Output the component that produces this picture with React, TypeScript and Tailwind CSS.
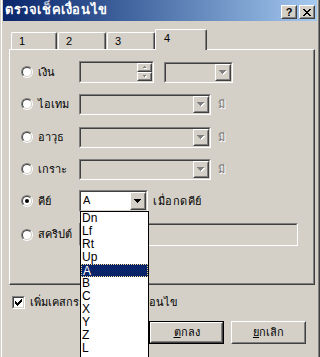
import React from "react";

function Sunken({
  className = "",
  innerClassName = "",
  children,
}: {
  className?: string;
  innerClassName?: string;
  children?: React.ReactNode;
}) {
  return (
    <div className={`shrink-0 border border-t-[#808080] border-l-[#808080] border-r-white border-b-white ${className}`}>
      <div className={`h-full w-full border border-t-[#404040] border-l-[#404040] border-r-[#d4d0c8] border-b-[#d4d0c8] ${innerClassName}`}>
        {children}
      </div>
    </div>
  );
}

function Raised({ className = "", children }: { className?: string; children?: React.ReactNode }) {
  return (
    <div className={`shrink-0 border border-t-white border-l-white border-r-[#404040] border-b-[#404040] bg-[#d4d0c8] ${className}`}>
      <div className="flex h-full w-full items-center justify-center border border-t-[#d4d0c8] border-l-[#d4d0c8] border-r-[#808080] border-b-[#808080]">
        {children}
      </div>
    </div>
  );
}

function DownArrow({ disabled = false }: { disabled?: boolean }) {
  const c = disabled ? "#808080" : "#000000";
  return (
    <svg width="8" height="5" shapeRendering="crispEdges">
      {disabled && (
        <g fill="#ffffff">
          <rect x="1" y="1" width="7" height="1" />
          <rect x="2" y="2" width="5" height="1" />
          <rect x="3" y="3" width="3" height="1" />
          <rect x="4" y="4" width="1" height="1" />
        </g>
      )}
      <g fill={c}>
        <rect x="0" y="0" width="7" height="1" />
        <rect x="1" y="1" width="5" height="1" />
        <rect x="2" y="2" width="3" height="1" />
        <rect x="3" y="3" width="1" height="1" />
      </g>
    </svg>
  );
}

function SpinArrow({ up }: { up: boolean }) {
  return (
    <svg width="6" height="4" shapeRendering="crispEdges">
      <g fill="#ffffff">
        {up ? (
          <>
            <rect x="3" y="1" width="1" height="1" />
            <rect x="2" y="2" width="3" height="1" />
          </>
        ) : (
          <>
            <rect x="2" y="1" width="3" height="1" />
            <rect x="3" y="2" width="1" height="1" />
          </>
        )}
      </g>
      <g fill="#808080">
        {up ? (
          <>
            <rect x="2" y="0" width="1" height="1" />
            <rect x="1" y="1" width="3" height="1" />
          </>
        ) : (
          <>
            <rect x="1" y="0" width="3" height="1" />
            <rect x="2" y="1" width="1" height="1" />
          </>
        )}
      </g>
    </svg>
  );
}

function Radio({ checked = false }: { checked?: boolean }) {
  return (
    <span className="flex h-[12px] w-[12px] shrink-0 rounded-full border border-t-[#808080] border-l-[#808080] border-r-white border-b-white">
      <span className="flex h-full w-full items-center justify-center rounded-full border border-t-[#404040] border-l-[#404040] border-r-[#d4d0c8] border-b-[#d4d0c8] bg-white">
        {checked && <span className="h-[4px] w-[4px] rounded-full bg-black" />}
      </span>
    </span>
  );
}

function ComboInner({ disabled, value }: { disabled: boolean; value?: string }) {
  return (
    <div className="flex h-full">
      <div className="flex-1 pl-[2px] leading-[17px]">{value}</div>
      <Raised className="h-full w-[16px]">
        <DownArrow disabled={disabled} />
      </Raised>
    </div>
  );
}

function Row({
  label,
  checked = false,
  className = "",
  children,
}: {
  label: string;
  checked?: boolean;
  className?: string;
  children?: React.ReactNode;
}) {
  return (
    <div className={`flex items-center pl-[11px] ${className}`}>
      <Radio checked={checked} />
      <span className="ml-[5px] w-[41px] shrink-0 whitespace-nowrap">{label}</span>
      {children}
    </div>
  );
}

const disabledText = "text-[#808080] [text-shadow:1px_1px_0_#ffffff]";

const keys = ["Dn", "Lf", "Rt", "Up", "A", "B", "C", "X", "Y", "Z", "L"];

export default function App() {
  return (
    <div className="relative h-[357px] w-[320px] overflow-hidden border-l border-r border-l-[#d4d0c8] border-r-[#404040] bg-[#d4d0c8] font-['Liberation_Sans','DejaVu_Sans',sans-serif] text-[11px] text-black">
      <div className="h-full border-l border-r border-l-white border-r-[#808080] px-px">
        {/* caption */}
        <div className="flex h-[21px] items-start justify-between bg-gradient-to-r from-[#0a246a] to-[#a6caf0]">
          <span className="pl-[2px] pt-[2px] text-[13px] font-bold leading-[16px] tracking-[0.6px] text-white">ตรวจเช็คเงื่อนไข</span>
          <div className="flex gap-[2px] pr-[2px] pt-[5px]">
            <Raised className="h-[14px] w-[16px]">
              <span className="text-[11px] font-bold leading-none">?</span>
            </Raised>
            <Raised className="h-[14px] w-[16px]">
              <svg width="8" height="7" shapeRendering="crispEdges">
                <path d="M0 0h2v1h-2zM6 0h2v1h-2zM1 1h2v1h-2zM5 1h2v1h-2zM2 2h4v1h-4zM3 3h2v1h-2zM2 4h4v1h-4zM1 5h2v1h-2zM5 5h2v1h-2zM0 6h2v1h-2zM6 6h2v1h-2z" fill="#000" />
              </svg>
            </Raised>
          </div>
        </div>

        {/* tabs */}
        <div className="relative z-10 -mb-px mt-[8px] flex h-[21px] items-end pl-[8px]">
          {[
            { t: "1", w: "w-[46px]" },
            { t: "2", w: "w-[48px]" },
            { t: "3", w: "w-[48px]" },
          ].map((tab, i) => (
            <div
              key={tab.t}
              className={`mb-px h-[17px] ${tab.w} ${i > 0 ? "ml-px" : ""} rounded-t-[2px] border-l border-r border-t border-l-white border-r-[#404040] border-t-white pl-[7px] pt-[2px] leading-[13px] shadow-[inset_-1px_0_0_#808080]`}
            >
              {tab.t}
            </div>
          ))}
          <div className="h-[21px] w-[52px] rounded-t-[2px] border-l border-r border-t border-l-white border-r-[#404040] border-t-white bg-[#d4d0c8] pl-[8px] pt-[2px] leading-[13px] shadow-[inset_-1px_0_0_#808080]">
            4
          </div>
        </div>

        {/* tab page */}
        <div className="ml-[6px] mr-[2px] h-[236px] border border-b-[#404040] border-l-white border-r-[#404040] border-t-white pt-[11px] shadow-[inset_-1px_-1px_0_#808080]">
          <Row label="เงิน" className="h-[22px]">
            <Sunken className="h-[22px] w-[75px]">
              <div className="flex h-full justify-end">
                <div className="flex w-[15px] flex-col">
                  <Raised className="h-[9px] w-full">
                    <SpinArrow up />
                  </Raised>
                  <Raised className="h-[9px] w-full">
                    <SpinArrow up={false} />
                  </Raised>
                </div>
              </div>
            </Sunken>
            <Sunken className="ml-[10px] h-[21px] w-[69px]">
              <ComboInner disabled />
            </Sunken>
          </Row>

          <Row label="ไอเทม" className="mt-[10px] h-[22px]">
            <Sunken className="h-[21px] w-[132px]">
              <ComboInner disabled />
            </Sunken>
            <span className={`ml-[7px] ${disabledText}`}>มี</span>
          </Row>

          <Row label="อาวุธ" className="mt-[11px] h-[22px]">
            <Sunken className="h-[21px] w-[132px]">
              <ComboInner disabled />
            </Sunken>
            <span className={`ml-[7px] ${disabledText}`}>มี</span>
          </Row>

          <Row label="เกราะ" className="mt-[10px] h-[22px]">
            <Sunken className="h-[21px] w-[132px]">
              <ComboInner disabled />
            </Sunken>
            <span className={`ml-[7px] ${disabledText}`}>มี</span>
          </Row>

          <Row label="คีย์" checked className="mt-[10px] h-[22px]">
            <Sunken className="h-[22px] w-[69px]" innerClassName="bg-white">
              <ComboInner disabled={false} value="A" />
            </Sunken>
            <span className="ml-[5px] whitespace-nowrap tracking-[0.5px]">เมื่อกดคีย์</span>
          </Row>

          <Row label="สคริปต์" className="mt-[11px] h-[23px]">
            <Sunken className="h-[23px] w-[219px]" />
          </Row>
        </div>

        {/* checkbox */}
        <div className="ml-[9px] mt-[11px] flex h-[13px] items-center">
          <Sunken className="h-[13px] w-[13px]" innerClassName="flex items-center justify-center bg-white">
            <svg width="7" height="7" shapeRendering="crispEdges">
              <path d="M6 0h1v3h-1zM5 1h1v3h-1zM4 2h1v3h-1zM3 3h1v3h-1zM2 4h1v3h-1zM1 3h1v3h-1zM0 2h1v3h-1z" fill="#000" />
            </svg>
          </Sunken>
          <span className="ml-[5px] whitespace-nowrap">เพิ่มเคสกรณีไม่ตรงตามเงื่อนไข</span>
        </div>

        {/* buttons */}
        <div className="mt-[12px] flex justify-end gap-[7px] pr-[11px]">
          <div className="h-[23px] w-[75px] border border-black">
            <Raised className="h-full w-full">
              <span>
                <u>ต</u>กลง
              </span>
            </Raised>
          </div>
          <Raised className="h-[23px] w-[75px]">
            <span>
              <u>ย</u>กเลิก
            </span>
          </Raised>
        </div>
      </div>

      {/* open drop-down list of the key combo */}
      <div className="absolute left-[79px] top-[211px] h-[150px] w-[69px] border border-black bg-white text-[12px]">
        {keys.map((k) => (
          <div
            key={k}
            className={`h-[13px] pl-px leading-[13px] ${
              k === "A" ? "border border-dotted border-[#f5db95] bg-[#0a246a] pl-0 leading-[11px] text-white" : ""
            }`}
          >
            {k}
          </div>
        ))}
      </div>
    </div>
  );
}
